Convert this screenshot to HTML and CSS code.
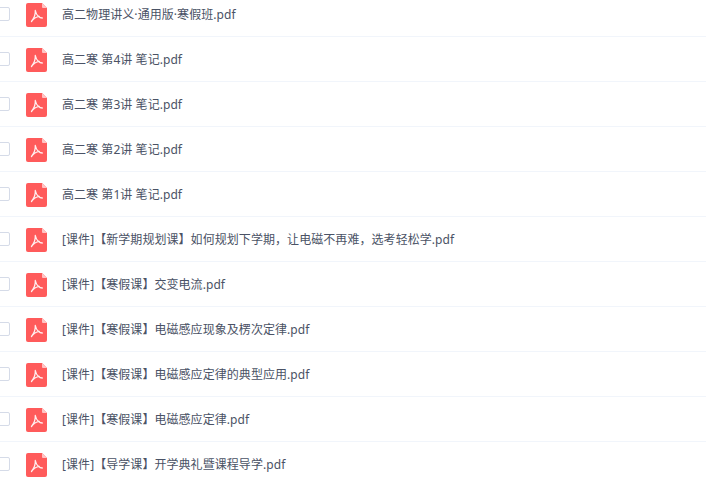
FILE: index.html
```html
<!DOCTYPE html>
<html>
  <head>
    <title>文件列表</title>
    <link rel="stylesheet" href="styles.css">
  </head>
  <body>
    <svg class="defs" width="0" height="0">
      <symbol id="pdf" viewBox="0 0 21 24">
        <path d="M2 0h14l5 5v17a2 2 0 0 1-2 2H2a2 2 0 0 1-2-2V2a2 2 0 0 1 2-2z" fill="#ff5b5b"/>
        <path d="M16 0l5 5h-4a1 1 0 0 1-1-1z" fill="#ffc4c4"/>
        <path d="M9.300 7.500c.5 2.600 1.500 4.300 3 5.700 1.100 1 2.500 1.700 4 1.800M9.300 7.500c.3 3.600-1.100 7.500-3.800 11M5.500 18.500c1.900-2.800 4.300-4.600 7.800-5.200" fill="none" stroke="#fff" stroke-opacity=".9" stroke-width="1.300" stroke-linecap="round"/>
      </symbol>
    </svg>
    <ul class="file-list">
      <li class="file-row"><span class="check"></span><svg class="file-icon"><use href="#pdf"/></svg><span class="file-name">高二物理讲义·通用版·寒假班.pdf</span></li>
      <li class="file-row"><span class="check"></span><svg class="file-icon"><use href="#pdf"/></svg><span class="file-name">高二寒 第4讲 笔记.pdf</span></li>
      <li class="file-row"><span class="check"></span><svg class="file-icon"><use href="#pdf"/></svg><span class="file-name">高二寒 第3讲 笔记.pdf</span></li>
      <li class="file-row"><span class="check"></span><svg class="file-icon"><use href="#pdf"/></svg><span class="file-name">高二寒 第2讲 笔记.pdf</span></li>
      <li class="file-row"><span class="check"></span><svg class="file-icon"><use href="#pdf"/></svg><span class="file-name">高二寒 第1讲 笔记.pdf</span></li>
      <li class="file-row"><span class="check"></span><svg class="file-icon"><use href="#pdf"/></svg><span class="file-name">[课件]【新学期规划课】如何规划下学期，让电磁不再难，选考轻松学.pdf</span></li>
      <li class="file-row"><span class="check"></span><svg class="file-icon"><use href="#pdf"/></svg><span class="file-name">[课件]【寒假课】交变电流.pdf</span></li>
      <li class="file-row"><span class="check"></span><svg class="file-icon"><use href="#pdf"/></svg><span class="file-name">[课件]【寒假课】电磁感应现象及楞次定律.pdf</span></li>
      <li class="file-row"><span class="check"></span><svg class="file-icon"><use href="#pdf"/></svg><span class="file-name">[课件]【寒假课】电磁感应定律的典型应用.pdf</span></li>
      <li class="file-row"><span class="check"></span><svg class="file-icon"><use href="#pdf"/></svg><span class="file-name">[课件]【寒假课】电磁感应定律.pdf</span></li>
      <li class="file-row"><span class="check"></span><svg class="file-icon"><use href="#pdf"/></svg><span class="file-name">[课件]【导学课】开学典礼暨课程导学.pdf</span></li>
    </ul>
  </body>
</html>
```

FILE: styles.css
```css
html,
body {
  height: 100%;
  overflow: hidden;
}
body {
  margin: 0;
  background: #fff;
  font-family: "Noto Sans", "Noto Sans CJK SC", sans-serif;
  font-size: 12px;
  letter-spacing: 0.06px;
  color: #4a5265;
}
.defs {
  display: block;
}
.file-list {
  list-style: none;
  margin: -8px 0 0 -4px;
  padding: 0;
}
.file-row {
  display: flex;
  align-items: center;
  height: 44px;
  border-bottom: 1px solid #f1f5fb;
}
.check {
  flex: none;
  width: 14px;
  height: 14px;
  box-sizing: border-box;
  border: 1px solid #d5dbe8;
  border-radius: 2px;
}
.file-icon {
  flex: none;
  width: 21px;
  height: 24px;
  margin: 2px 15px 0 16px;
}
.file-name {
  white-space: nowrap;
}
```
